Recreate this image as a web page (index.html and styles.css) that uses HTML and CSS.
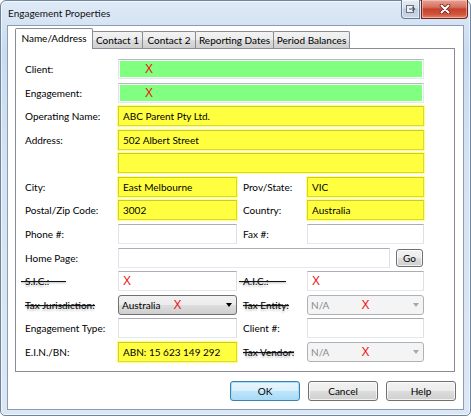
FILE: index.html
```html
<!DOCTYPE html>
<html>
<head>
<meta charset="utf-8">
<link rel="stylesheet" href="styles.css">
</head>
<body>
<div class="window">
  <div class="titlebar">
    <span class="title">Engagement Properties</span>
    <span class="tb-btn tb-help">
      <svg width="11" height="10" viewBox="0 0 11 10"><rect x="1.5" y="1.5" width="7" height="7" fill="#eef1f5" stroke="#6a7380"/><path d="M4 5h5.5M7.5 3l2 2-2 2" fill="none" stroke="#4a5360" stroke-width="1.1"/></svg>
    </span>
    <span class="tb-btn tb-close">
      <svg width="12" height="10" viewBox="0 0 12 10"><path d="M2.5 1.5l7 7M9.5 1.5l-7 7" stroke="#6b1e1a" stroke-width="3.6" stroke-linecap="round"/><path d="M2.5 1.5l7 7M9.5 1.5l-7 7" stroke="#fff" stroke-width="2.1" stroke-linecap="round"/></svg>
    </span>
  </div>
  <div class="client">
    <div class="tabs">
      <div class="tab active t1">Name/Address</div>
      <div class="tab t2">Contact 1</div>
      <div class="tab t3">Contact 2</div>
      <div class="tab t4">Reporting Dates</div>
      <div class="tab t5">Period Balances</div>
    </div>
    <div class="panel">
      <div class="form">
        <div class="lbl">Client:</div>
        <div class="field green span3"><span class="x x-wide">X</span></div>

        <div class="lbl">Engagement:</div>
        <div class="field green span3"><span class="x x-wide">X</span></div>

        <div class="lbl">Operating Name:</div>
        <div class="field yellow span3">ABC Parent Pty Ltd.</div>

        <div class="lbl">Address:</div>
        <div class="field yellow span3">502 Albert Street</div>

        <div class="lbl"></div>
        <div class="field yellow span3"></div>

        <div class="lbl">City:</div>
        <div class="field yellow">East Melbourne</div>
        <div class="lbl rlbl">Prov/State:</div>
        <div class="field yellow">VIC</div>

        <div class="lbl">Postal/Zip Code:</div>
        <div class="field yellow">3002</div>
        <div class="lbl rlbl">Country:</div>
        <div class="field yellow">Australia</div>

        <div class="lbl">Phone #:</div>
        <div class="field white"></div>
        <div class="lbl rlbl">Fax #:</div>
        <div class="field white"></div>

        <div class="lbl">Home Page:</div>
        <div class="homerow span3">
          <div class="field white grow"></div>
          <div class="btn go">Go</div>
        </div>

        <div class="lbl"><span class="strike long">S.I.C.:</span></div>
        <div class="field white"><span class="x">X</span></div>
        <div class="lbl rlbl"><span class="strike long">A.I.C.:</span></div>
        <div class="field white"><span class="x">X</span></div>

        <div class="lbl"><span class="strike">Tax Jurisdiction:</span></div>
        <div class="combo"><span>Australia</span><span class="x x-combo">X</span><span class="arrow"></span></div>
        <div class="lbl rlbl"><span class="strike">Tax Entity:</span></div>
        <div class="combo disabled"><span>N/A</span><span class="x x-na">X</span><span class="arrow"></span></div>

        <div class="lbl">Engagement Type:</div>
        <div class="field white"></div>
        <div class="lbl rlbl">Client #:</div>
        <div class="field white"></div>

        <div class="lbl">E.I.N./BN:</div>
        <div class="field yellow">ABN: 15 623 149 292</div>
        <div class="lbl rlbl"><span class="strike">Tax Vendor:</span></div>
        <div class="combo disabled"><span>N/A</span><span class="x x-na">X</span><span class="arrow"></span></div>
      </div>
    </div>
    <div class="buttons">
      <div class="btn default">OK</div>
      <div class="btn">Cancel</div>
      <div class="btn">Help</div>
    </div>
  </div>
</div>
</body>
</html>
```

FILE: styles.css
```css
* { box-sizing: border-box; }
html, body { margin: 0; padding: 0; }
body {
  background: #ffffff;
  width: 471px;
  height: 417px;
  font-family: "Lato", "Open Sans", sans-serif;
  font-size: 10px;
  color: #000;
}
.window {
  width: 471px;
  height: 416px;
  border: 1px solid #6f849e;
  border-radius: 6px 6px 5px 5px;
  background: linear-gradient(180deg, #dfeaf6 0%, #c9dcf0 12%, #d5e3f2 40%, #dbe7f4 100%);
  padding: 0 6px 5px 6px;
  display: flex;
  flex-direction: column;
  box-shadow: inset 0 0 0 1px rgba(255,255,255,0.6);
}
.titlebar {
  height: 24px;
  display: flex;
  align-items: flex-start;
}
.title {
  padding-left: 1px;
  line-height: 25px;
  flex: 1;
  color: #111;
}
.tb-btn {
  height: 19px;
  margin-top: -1px;
  display: flex;
  align-items: center;
  justify-content: center;
  border: 1px solid #6b7c92;
  border-top: none;
}
.tb-help {
  width: 19px;
  border-radius: 0 0 0 4px;
  background: linear-gradient(180deg, #e7edf4 0%, #d5dfea 45%, #bccadb 50%, #cbd8e6 100%);
  box-shadow: inset 0 0 0 1px rgba(255,255,255,0.5);
}
.tb-close {
  width: 47px;
  margin-left: 1px;
  margin-right: -4px;
  border-color: #6e2620;
  border-radius: 0 0 4px 0;
  background: linear-gradient(180deg, #e8a196 0%, #d7705f 40%, #c7412e 50%, #d2543c 80%, #e08a6e 100%);
  box-shadow: inset 0 0 0 1px rgba(255,220,210,0.5);
}
.client {
  flex: 1;
  background: #ffffff;
  border: 1px solid #8b9db5;
  padding: 2px 6px 0 6px;
  display: flex;
  flex-direction: column;
}
.tabs {
  height: 20px;
  display: flex;
  align-items: flex-end;
  padding-left: 1px;
}
.tab {
  height: 17px;
  border: 1px solid #898c95;
  border-bottom: none;
  margin-left: -1px;
  line-height: 16px;
  text-align: center;
  background: linear-gradient(180deg, #f3f3f3 0%, #ebebeb 50%, #dddddd 51%, #cfcfcf 100%);
  border-radius: 2px 2px 0 0;
  white-space: nowrap;
}
.tab.active {
  height: 21px;
  margin-left: 0;
  margin-bottom: -1px;
  line-height: 18px;
  background: #ffffff;
  position: relative;
  z-index: 1;
}
.t1 { width: 78px; }
.t2 { width: 51px; }
.t3 { width: 54px; }
.t4 { width: 79px; }
.t5 { width: 77px; }
.panel {
  width: 440px;
  height: 324px;
  margin-left: 1px;
  border: 1px solid #898c95;
  background: #ffffff;
  padding: 10px 0 0 9px;
}
.form {
  display: grid;
  grid-template-columns: 93px 119px 70px 117px;
  grid-auto-rows: 20px;
  row-gap: 3.58px;
}
.lbl {
  display: flex;
  align-items: center;
  white-space: nowrap;
}
.rlbl { padding-left: 6px; }
.span3 { grid-column: span 3; }
.field {
  height: 20px;
  border: 1px solid;
  padding: 0 4px;
  display: flex;
  align-items: center;
  white-space: nowrap;
}
.white {
  background: #fff;
  border-color: #abadb3 #dbdfe6 #e3e9ef #e2e3ea;
}
.green {
  background: #80ff80;
  border-color: #b4bac4 #e3e9ef #e3e9ef #e2e3ea;
  box-shadow: inset 0 0 0 1px #f4fff4;
}
.yellow {
  background: #ffff40;
  border-color: #c9c92a #d9d936 #d9d936 #d0d030;
  box-shadow: 0 0 0 1px #ffff7a;
}
.homerow {
  display: flex;
  gap: 6px;
  align-items: center;
  padding-right: 1px;
}
.grow { flex: 1; }
.x {
  color: #ee1111;
  font-family: "Liberation Sans", Arial, sans-serif;
  font-size: 12px;
}
.x-wide { margin-left: 22px; }
.x-combo { margin-left: 13px; }
.x-na { margin-left: 32px; }
.strike {
  position: relative;
  text-shadow: 0 2px 2px rgba(0,0,0,0.25);
}
.strike::after {
  content: "";
  position: absolute;
  left: 0;
  right: 0;
  top: 52%;
  height: 1px;
  background: #111;
  box-shadow: 0 1px 2px rgba(0,0,0,0.35);
}
.strike.long::after {
  left: -4px;
  right: -17px;
}
.combo {
  height: 20px;
  border: 1px solid #707070;
  border-radius: 3px;
  background: linear-gradient(180deg, #f2f2f2 0%, #ebebeb 50%, #dddddd 51%, #cfcfcf 100%);
  display: flex;
  align-items: center;
  padding: 0 4px 0 3px;
  white-space: nowrap;
}
.combo .arrow {
  margin-left: auto;
  width: 0;
  height: 0;
  border-left: 3.5px solid transparent;
  border-right: 3.5px solid transparent;
  border-top: 4px solid #000;
}
.combo.disabled {
  border-color: #adb2b5;
  background: #f4f4f4;
  color: #8a8a8a;
}
.combo.disabled .arrow { border-top-color: #a8a8a8; }
.combo.disabled .x { color: #ee1111; }
.btn {
  height: 20px;
  border: 1px solid #707070;
  border-radius: 3px;
  background: linear-gradient(180deg, #f2f2f2 0%, #ebebeb 50%, #dddddd 51%, #cfcfcf 100%);
  box-shadow: inset 0 0 0 1px rgba(255,255,255,0.7);
  display: flex;
  align-items: center;
  justify-content: center;
}
.go { width: 27px; height: 18px; }
.buttons {
  display: flex;
  justify-content: flex-end;
  gap: 8px;
  margin-top: 9px;
  padding-right: 1px;
}
.buttons .btn { width: 70px; }
.btn.default {
  border-color: #3c7fb1;
  box-shadow: inset 0 0 0 1px #a9dcf6;
  background: linear-gradient(180deg, #eaf6fd 0%, #d9f0fc 50%, #bee6fd 51%, #a7d9f5 100%);
}
```
